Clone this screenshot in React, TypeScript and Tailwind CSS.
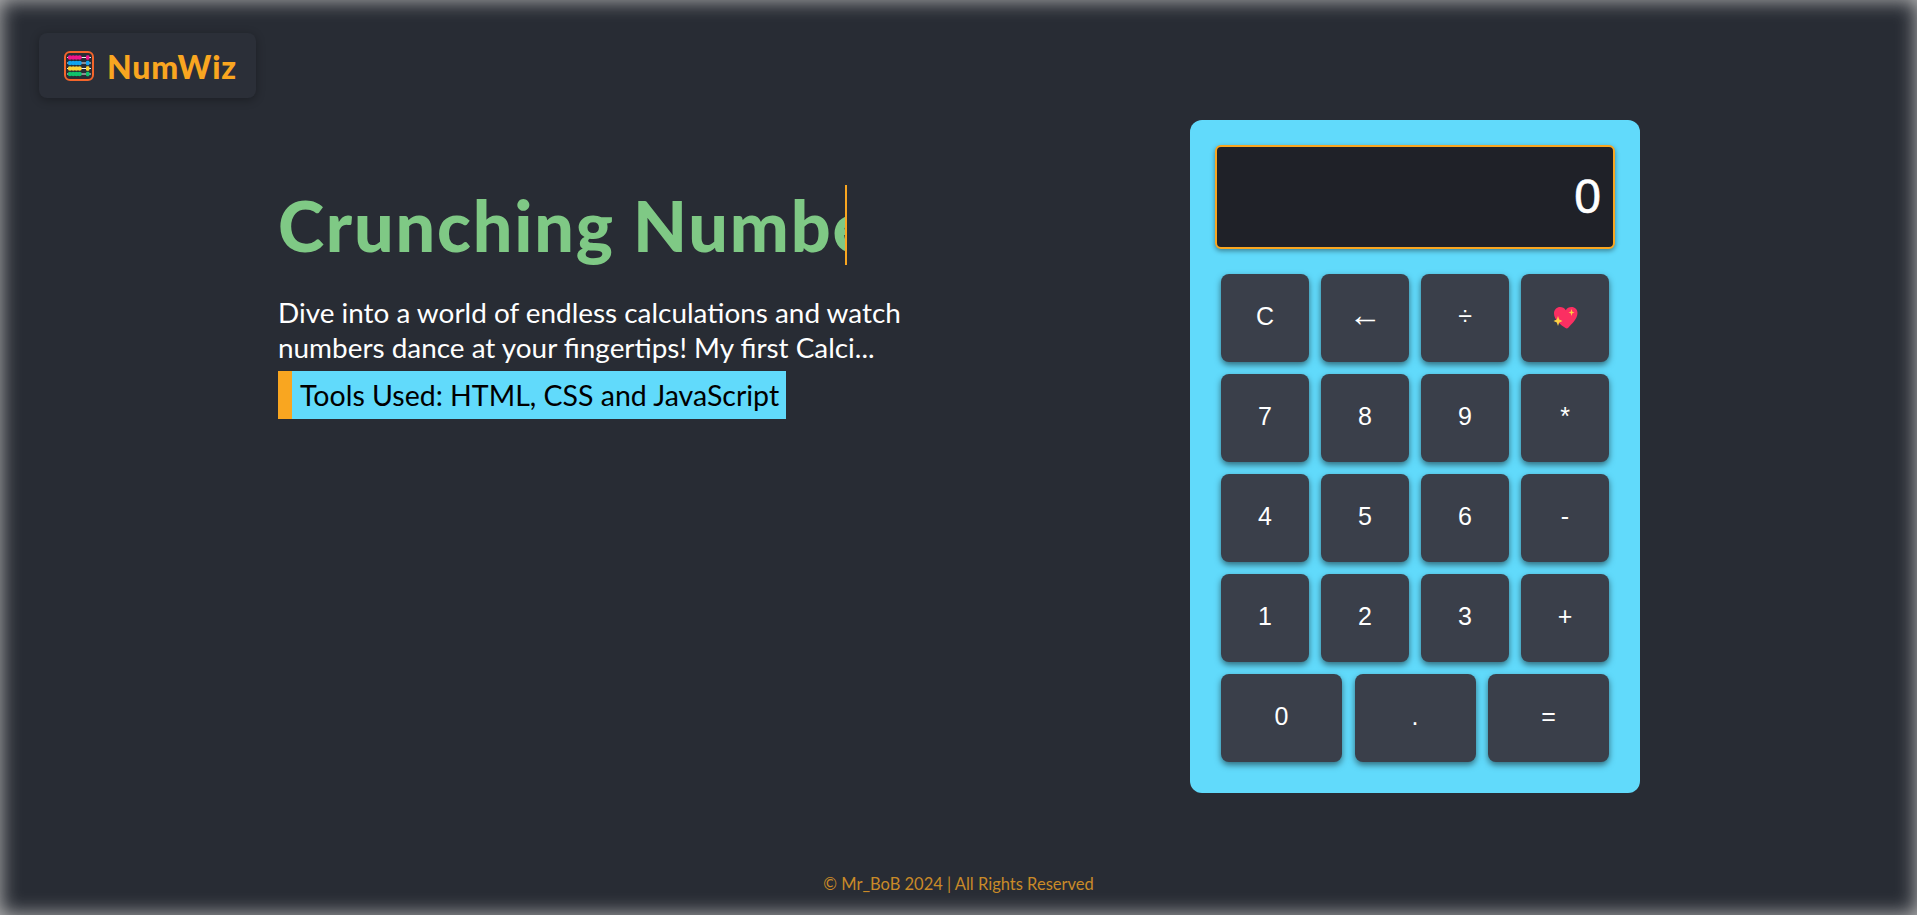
import * as React from "react";

const keyRows = [
  ["C", "←", "÷", "heart"],
  ["7", "8", "9", "*"],
  ["4", "5", "6", "-"],
  ["1", "2", "3", "+"],
];

const abacusRows = [
  { y: 6.5, color: "#f0148c" },
  { y: 12, color: "#12a5ee" },
  { y: 17.5, color: "#fbd336" },
  { y: 23, color: "#0fc36b" },
];

const AbacusIcon = () => (
  <svg width="30" height="30" viewBox="0 0 30 30" fill="none" aria-hidden="true">
    <rect x="1" y="1" width="28" height="28" rx="5" fill="#282c34" stroke="#f4652b" strokeWidth="2" />
    {abacusRows.map((row) => (
      <g key={row.y}>
        <line x1="3" x2="27" y1={row.y} y2={row.y} stroke="#eceff1" strokeWidth="1" />
        {[6, 9.2, 12.4, 15.6].map((cx) => (
          <circle key={cx} cx={cx} cy={row.y} r="2.2" fill={row.color} />
        ))}
        <rect x="22" y={row.y - 2.2} width="3.4" height="4.4" rx="1.2" fill={row.color} />
      </g>
    ))}
  </svg>
);

const SparkleHeart = () => (
  <svg width="25" height="23" viewBox="0 0 25 23" aria-hidden="true">
    <path
      d="M12.5 22 C8 19 1 14 1 7.5 C1 3.5 4 1 7 1 C9.5 1 11.5 2.2 12.8 4.2 C14 2.2 16 1 18.5 1 C22 1 24.5 3.5 24.5 7 C24.5 13 18 18.5 15.5 21.5 C14.5 22.5 13.5 22.7 12.5 22 Z"
      fill="#fb2f62"
    />
    <path d="M18.5 3 L19.3 5.7 L21.5 6.5 L19.3 7.3 L18.5 10 L17.7 7.3 L15.5 6.5 L17.7 5.7 Z" fill="#fdd043" />
    <path d="M5 10 L6.2 13.6 L9.5 15 L6.2 16.4 L5 20 L3.8 16.4 L0.5 15 L3.8 13.6 Z" fill="#fdd043" />
  </svg>
);

const Key = ({ label, wide }: { label: string; wide?: boolean }) => (
  <button
    className={`h-[88px] ${wide ? "w-[121px]" : "w-[88px]"} flex items-center justify-center pb-[2px] rounded-lg bg-[#3a3f4a] text-white text-[25px] shadow-[0_3px_6px_rgba(0,0,0,0.5)]`}
  >
    {label === "heart" ? (
      <SparkleHeart />
    ) : label === "←" ? (
      <span className="mb-[6px] text-[33px] leading-none">←</span>
    ) : (
      label
    )}
  </button>
);

export default function App() {
  return (
    <div className="h-screen overflow-hidden flex flex-col bg-[#282c34] shadow-[inset_0_0_20px_#bbbbbb] font-['Lato','Liberation_Sans',sans-serif]">
      <header className="pt-[33px] pl-[39px]">
        <div className="w-[217px] h-[65px] flex items-center gap-[13px] pl-[25px] rounded-lg bg-[#2b2f38] shadow-[0_2px_10px_rgba(0,0,0,0.3)]">
          <AbacusIcon />
          <span className="mt-[2px] text-[32px] tracking-[0.9px] font-black text-[#f9a620]">NumWiz</span>
        </div>
      </header>

      <main className="mt-[22px] pl-[278px] flex">
        <section className="w-[912px] pt-[65px]">
          <div className="w-[569px] h-[80px] overflow-hidden whitespace-nowrap border-r-2 border-[#f9a620] flex items-center">
            <h1 className="text-[70px] font-black tracking-[1.8px] text-[#7fc985]">Crunching Numbers</h1>
          </div>
          <p className="mt-[30px] text-[27.9px] leading-[35px] text-white">
            <span className="block">Dive into a world of endless calculations and watch</span>
            <span className="block">numbers dance at your fingertips! My first Calci...</span>
          </p>
          <div className="mt-[6px] w-[508px] h-[48px] flex items-center pl-[8px] bg-[#61dafb] border-l-[14px] border-[#f9a620] text-[28.5px] text-black whitespace-nowrap">
            Tools Used: HTML, CSS and JavaScript
          </div>
        </section>

        <section className="w-[450px] h-[673px] rounded-xl bg-[#61dafb] pt-[25px] px-[25px]">
          <div className="h-[104px] flex items-center justify-end pr-[12px] rounded-md border-2 border-[#f9a620] bg-[#1f2128] shadow-[0_2px_5px_rgba(0,0,0,0.4)] text-white text-[48px] [-webkit-text-stroke:0.6px_white] font-['Liberation_Sans',sans-serif]">
            0
          </div>
          <div className="mt-[25px] px-[6px] flex flex-col gap-[12px] font-['Liberation_Sans',sans-serif]">
            {keyRows.map((row) => (
              <div key={row[0]} className="flex justify-between">
                {row.map((label) => (
                  <Key key={label} label={label} />
                ))}
              </div>
            ))}
            <div className="flex justify-between">
              <Key label="0" wide />
              <Key label="." wide />
              <Key label="=" wide />
            </div>
          </div>
        </section>
      </main>

      <footer className="mt-[79px] text-center text-[16.5px] text-[#c98a28]">
        © Mr_BoB 2024 | All Rights Reserved
      </footer>
    </div>
  );
}
